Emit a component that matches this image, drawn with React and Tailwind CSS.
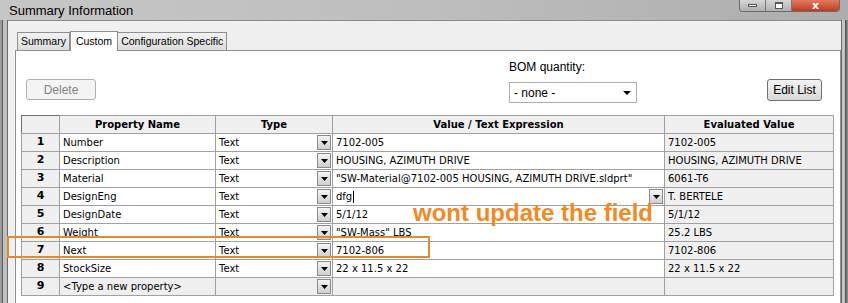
import React from "react";

const rows = [
  { n: 1, name: "Number", type: "Text", value: "7102-005", evald: "7102-005" },
  { n: 2, name: "Description", type: "Text", value: "HOUSING, AZIMUTH DRIVE", evald: "HOUSING, AZIMUTH DRIVE" },
  { n: 3, name: "Material", type: "Text", value: "\"SW-Material@7102-005 HOUSING, AZIMUTH DRIVE.sldprt\"", evald: "6061-T6" },
  { n: 4, name: "DesignEng", type: "Text", value: "dfg", evald: "T. BERTELE", editing: true },
  { n: 5, name: "DesignDate", type: "Text", value: "5/1/12", evald: "5/1/12" },
  { n: 6, name: "Weight", type: "Text", value: "\"SW-Mass\" LBS", evald: "25.2 LBS" },
  { n: 7, name: "Next", type: "Text", value: "7102-806", evald: "7102-806" },
  { n: 8, name: "StockSize", type: "Text", value: "22 x 11.5 x 22", evald: "22 x 11.5 x 22" },
];

const ui = { fontFamily: "'Liberation Sans', Arial, sans-serif" };

function DropButton() {
  return (
    <div className="w-[14px] h-[15px] border border-[#8a8a8a] bg-gradient-to-b from-[#f4f4f4] to-[#cfcfcf] flex items-center justify-center shrink-0">
      <svg width="7" height="4" viewBox="0 0 7 4">
        <path d="M0 0h7L3.5 4z" fill="#000" />
      </svg>
    </div>
  );
}

function TypeCell({ text, gray }) {
  return (
    <td className={`border border-[#a0a0a0] p-0 ${gray ? "bg-[#efefef]" : "bg-white"}`}>
      <div className="h-[17px] flex items-center justify-between pl-[3px] pr-[1px]">
        <span>{text}</span>
        <DropButton />
      </div>
    </td>
  );
}

export default function App() {
  return (
    <div
      className="relative w-[848px] h-[303px] overflow-hidden bg-[#b8b8b8]"
      style={{ fontFamily: "'DejaVu Sans', Tahoma, sans-serif" }}
    >
      {/* title bar */}
      <div className="h-[20px] flex items-start justify-between bg-gradient-to-r from-[#c6c6c6] via-[#bebebe] to-[#adadad]">
        <div className="pl-[9px] pt-[1px] text-[13px] text-black" style={ui}>
          Summary Information
        </div>
        <div className="flex mr-[8px] h-[12px] rounded-b-[4px] overflow-hidden border border-t-0 border-[#6b6b6b]">
          <div className="w-[26px] bg-gradient-to-b from-[#d6d6d6] to-[#b0b0b0] border-r border-[#7a7a7a] flex items-center justify-center">
            <div className="w-[9px] h-[3px] bg-white border border-[#555]" />
          </div>
          <div className="w-[26px] bg-gradient-to-b from-[#d6d6d6] to-[#b0b0b0] border-r border-[#7a7a7a] flex items-center justify-center">
            <div className="w-[8px] h-[7px] bg-white border border-[#555] border-t-2" />
          </div>
          <div className="w-[47px] bg-gradient-to-b from-[#e07a60] to-[#c03a1e] flex items-center justify-center text-white text-[11px] font-bold leading-none">
            x
          </div>
        </div>
      </div>

      {/* window body */}
      <div className="flex h-[283px]">
        <div className="w-[8px] flex">
          <div className="w-[2px] bg-[#9a9a9a]" />
          <div className="w-[1px] bg-[#5c5c5c]" />
          <div className="w-[4px] bg-[#c0c0c0]" />
          <div className="w-[1px] bg-[#6a6a6a]" />
        </div>
        <div className="flex-1 bg-[#f0f0f0] pl-[7px] pt-[9px] flex flex-col border-t border-[#8a8a8a]">
          {/* tabs */}
          <div className="flex items-end h-[20px] pl-[2px] text-[10.5px] text-black whitespace-nowrap" style={ui}>
            <div className="h-[18px] px-[3px] shrink-0 border border-b-0 border-[#8e8f8f] bg-gradient-to-b from-[#f2f2f2] to-[#dcdcdc] flex items-center leading-none">
              Summary
            </div>
            <div className="h-[20px] px-[5px] shrink-0 border border-b-0 border-[#8e8f8f] bg-white flex items-start pt-[2px] leading-[14px] -mb-[1px] relative z-10">
              Custom
            </div>
            <div className="h-[18px] px-[3px] shrink-0 border border-b-0 border-l-0 border-[#8e8f8f] bg-gradient-to-b from-[#f2f2f2] to-[#dcdcdc] flex items-center leading-none">
              Configuration Specific
            </div>
          </div>

          {/* panel */}
          <div className="flex-1 bg-white border border-[#8e8f8f] border-b-0 px-[5px]">
            <div className="h-[64px] flex items-start text-[12px]" style={ui}>
              <button className="ml-[5px] mt-[28px] w-[70px] h-[21px] rounded-[3px] border border-[#adb2b5] bg-[#f4f4f4] text-[#838383] text-[12px]">
                Delete
              </button>
              <div className="ml-[413px] mt-[9px] flex flex-col">
                <div className="text-[12px] text-black leading-[15px]">BOM quantity:</div>
                <div className="mt-[7px] w-[128px] h-[21px] border border-[#abadb3] bg-white flex items-center justify-between pl-[4px] pr-[5px] text-[12px]">
                  <span>- none -</span>
                  <svg width="8" height="4" viewBox="0 0 8 4">
                    <path d="M0 0h8L4 4z" fill="#000" />
                  </svg>
                </div>
              </div>
              <button className="ml-[130px] mt-[28px] w-[55px] h-[22px] rounded-[3px] border border-[#707070] bg-gradient-to-b from-[#f2f2f2] to-[#d8d8d8] text-[12px] text-black">
                Edit List
              </button>
            </div>

            {/* grid */}
            <table className="border-collapse table-fixed text-[10px] text-black border border-[#6f6f6f]" style={{ width: 812 }}>
              <colgroup>
                <col style={{ width: 38 }} />
                <col style={{ width: 156 }} />
                <col style={{ width: 117 }} />
                <col style={{ width: 332 }} />
                <col style={{ width: 169 }} />
              </colgroup>
              <thead>
                <tr className="h-[18px] bg-[#f0f0f0] font-bold">
                  <th className="border border-dotted border-black p-0" />
                  <th className="border border-[#a0a0a0] p-0 font-bold">Property Name</th>
                  <th className="border border-[#a0a0a0] p-0 font-bold">Type</th>
                  <th className="border border-[#a0a0a0] p-0 font-bold">Value / Text Expression</th>
                  <th className="border border-[#a0a0a0] p-0 font-bold">Evaluated Value</th>
                </tr>
              </thead>
              <tbody>
                {rows.map((r) => (
                  <tr key={r.n} className="h-[18px]">
                    <td className="border border-[#a0a0a0] bg-[#f0f0f0] text-center font-bold p-0 text-[11px]">{r.n}</td>
                    <td className="border border-[#a0a0a0] p-0 whitespace-nowrap overflow-hidden">
                      <div className="pl-[3px]">{r.name}</div>
                    </td>
                    <TypeCell text={r.type} />
                    <td className="border border-[#a0a0a0] p-0">
                      {r.editing ? (
                        <div className="h-[17px] flex items-center justify-between pl-[3px] pr-[1px]">
                          <span className="flex items-center">
                            dfg<span className="inline-block w-[1px] h-[12px] bg-black ml-[1px]" />
                          </span>
                          <DropButton />
                        </div>
                      ) : (
                        <div className="pl-[3px] whitespace-nowrap overflow-hidden">{r.value}</div>
                      )}
                    </td>
                    <td className="border border-[#a0a0a0] bg-[#f0f0f0] p-0 whitespace-nowrap overflow-hidden">
                      <div className="pl-[3px]">{r.evald}</div>
                    </td>
                  </tr>
                ))}
                <tr className="h-[18px] bg-[#efefef]">
                  <td className="border border-[#a0a0a0] text-center font-bold p-0 text-[11px]">9</td>
                  <td className="border border-[#a0a0a0] p-0 whitespace-nowrap">
                    <div className="pl-[3px]">&lt;Type a new property&gt;</div>
                  </td>
                  <TypeCell text="" gray />
                  <td className="border border-[#a0a0a0] p-0" />
                  <td className="border border-[#a0a0a0] p-0" />
                </tr>
              </tbody>
            </table>
          </div>
        </div>
        <div className="w-[7px] flex">
          <div className="w-[1px] bg-[#6a6a6a]" />
          <div className="w-[3px] bg-[#c4c4c4]" />
          <div className="w-[3px] bg-gradient-to-r from-[#4a4a4a] to-[#9a9a9a]" />
        </div>
      </div>

      {/* annotation overlay */}
      <div className="absolute left-[7px] top-[236px] w-[423px] h-[22px] border-2 border-[#e08a32] pointer-events-none" />
      <div
        className="absolute left-[413px] top-[201px] text-[24px] font-bold text-[#f08a24] leading-none pointer-events-none"
        style={ui}
      >
        wont update the field
      </div>
    </div>
  );
}
